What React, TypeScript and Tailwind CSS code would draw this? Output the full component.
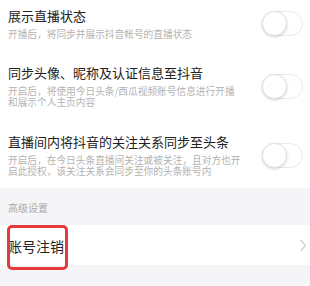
const font = { fontFamily: '"Noto Sans CJK SC", "Noto Sans", sans-serif' };

const Toggle = () => (
  <div className="relative h-[25px] w-[41px] shrink-0 rounded-full border border-[#ebebeb] bg-white">
    <div className="absolute left-[-1px] top-[-1px] h-[25px] w-[25px] rounded-full border border-[#e2e2e2] bg-white shadow-[0_1px_3px_rgba(0,0,0,0.18)]" />
  </div>
);

const SwitchRow = ({
  title,
  desc,
  pb,
}: {
  title: string;
  desc: string;
  pb: string;
}) => (
  <div className={`flex items-center justify-between bg-white pl-2 pr-[7px] pt-[7px] ${pb}`}>
    <div className="w-[236px]">
      <div className="text-[13px] leading-[18px] text-[#222]">{title}</div>
      <div className="mt-[4px] text-[9.7px] leading-[11px] text-[#b3b3b3]">{desc}</div>
    </div>
    <Toggle />
  </div>
);

export default function App() {
  return (
    <div className="h-[286px] w-[310px] overflow-hidden bg-[#f5f5f7]" style={font}>
      <SwitchRow
        title="展示直播状态"
        desc="开播后，将同步并展示抖音帐号的直播状态"
        pb="pb-[17px]"
      />
      <SwitchRow
        title="同步头像、昵称及认证信息至抖音"
        desc="开启后，将使用今日头条/西瓜视频账号信息进行开播和展示个人主页内容"
        pb="pb-[18px]"
      />
      <SwitchRow
        title="直播间内将抖音的关注关系同步至头条"
        desc="开启后，在今日头条直播间关注或被关注，且对方也开启此授权，该关注关系会同步至你的头条账号内"
        pb="pb-[11px]"
      />
      <div className="px-2 pb-[10px] pt-[13px] text-[10px] leading-[14px] text-[#aaa]">高级设置</div>
      <div className="relative flex h-[40px] items-center justify-between bg-white pl-2 pr-[3px]">
        <span className="pt-[2px] text-[14px] text-[#222]">账号注销</span>
        <svg width="8" height="13" viewBox="0 0 8 13" fill="none">
          <polyline points="1.5,1 6.5,6.5 1.5,12" stroke="#cfcfcf" strokeWidth="1.2" />
        </svg>
        <div className="absolute left-[7px] top-0 h-[45px] w-[61px] rounded-[5px] border-[3px] border-[#e5393c]" />
      </div>
    </div>
  );
}
